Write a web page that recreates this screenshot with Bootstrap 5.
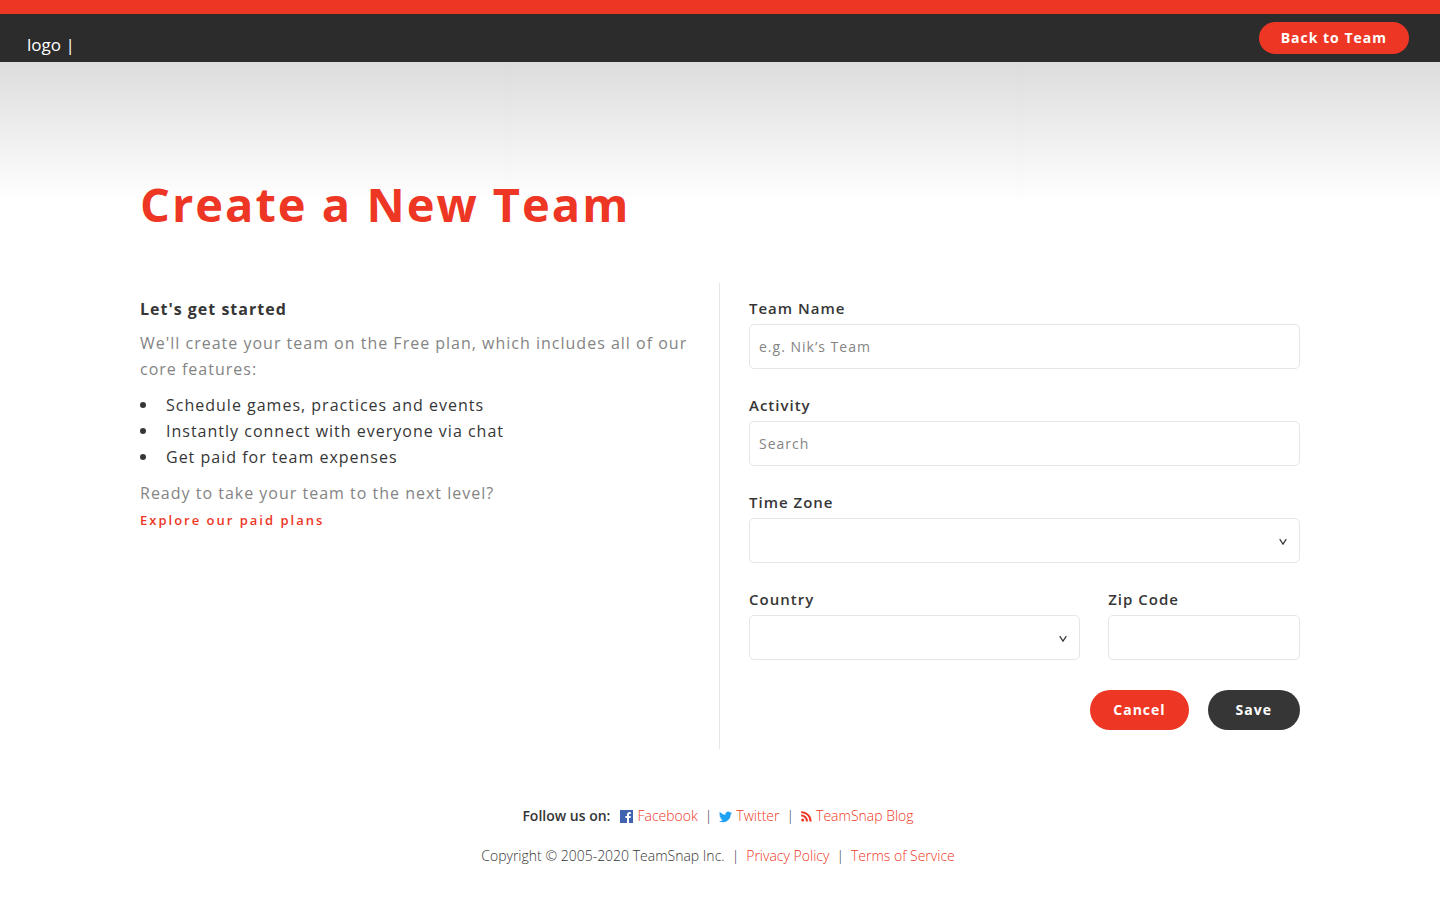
<!DOCTYPE html>
<html lang="en">
<head>
<meta charset="utf-8">
<meta name="viewport" content="width=device-width, initial-scale=1">
<title>Create a New Team</title>
<link rel="stylesheet" href="https://cdn.jsdelivr.net/npm/bootstrap@5.3.0/dist/css/bootstrap.min.css">
<style>
  :root { --brand: #ee3625; --ink: #363636; --bar: #2c2c2c; --line: #e6e6e6; }
  body { font-family: "Open Sans", sans-serif; font-size: 16px; line-height: 26px; color: var(--ink); background: #fff; }
  .topbar { border-top: 14px solid var(--brand); background: var(--bar); min-height: 62px; padding: 0 31px 0 27px; }
  .brand-text { font-size: 17px; line-height: 24px; color: #fff; padding-top: 14px; }
  .hero-fade { background: linear-gradient(#dcdcdc, #fff 140px) no-repeat; }
  .page-wrap { max-width: 1160px; }
  .page-title { font-size: 47px; line-height: 64px; font-weight: 700; letter-spacing: 2px; color: var(--brand); padding: 110px 0 47px; }
  .btn-pill { --bs-btn-color: #fff; --bs-btn-hover-color: #fff; --bs-btn-active-color: #fff; --bs-btn-border-width: 0; font-size: 14px; line-height: 20px; font-weight: 700; letter-spacing: 1px; padding: 10px 23px; }
  .btn-brand { --bs-btn-bg: var(--brand); --bs-btn-hover-bg: #d42d1e; --bs-btn-active-bg: #c0281a; }
  .btn-ink { --bs-btn-bg: var(--ink); --bs-btn-hover-bg: #222; --bs-btn-active-bg: #111; padding-inline: 28px; }
  .btn-back { padding: 6px 22px; }
  .intro, .team-form { padding-top: 13px; letter-spacing: 1px; }
  .intro { padding-right: 28px; }
  .intro-title { font-size: 16px; line-height: 26px; font-weight: 700; }
  .muted-text { color: #848484; }
  .feature-list { padding-left: 26px; margin: 10px 0; list-style: none; }
  .feature-list li { position: relative; }
  .feature-list li::before { content: ""; position: absolute; left: -26px; top: 10px; width: 6px; height: 6px; border-radius: 50%; background: var(--ink); }
  .brand-link { color: var(--brand); text-decoration: none; }
  .brand-link:hover { text-decoration: underline; }
  .plans-link { font-size: 13px; font-weight: 600; letter-spacing: 2px; }
  .form-label { font-size: 15px; line-height: 24px; font-weight: 600; margin-bottom: 4px; }
  .form-control, .form-select { height: 45px; border-color: var(--line); border-radius: 5px; font-size: 14px; letter-spacing: 1px; padding-left: 9px; color: var(--ink); }
  .form-control::placeholder { color: #848484; }
  .form-select { background-image: url("data:image/svg+xml,%3Csvg xmlns='http://www.w3.org/2000/svg' viewBox='0 0 8 8'%3E%3Cpath d='M.7 1.2 4 6.2 7.3 1.2' fill='none' stroke='%23363636' stroke-width='1.2'/%3E%3C/svg%3E"); background-size: 8px 8px; background-position: right 12px top 19px; }
  .place-grid { display: grid; grid-template-columns: 19fr 11fr; column-gap: 28px; }
  .form-actions { gap: 19px; padding: 30px 0 19px; }
  .page-foot { font-size: 14px; line-height: 20px; font-weight: 300; padding-top: 57px; }
  .foot-line { gap: 7px; padding-right: 4px; }
  .follow-text { font-weight: 600; margin-right: 3px; }
  @media (min-width: 992px) {
    .intro { border-right: 1px solid var(--line); }
    .team-form { padding-left: 29px; }
  }
</style>
</head>
<body>
<header class="topbar d-flex justify-content-between align-items-center">
  <span class="brand-text">logo |</span>
  <button type="button" class="btn btn-pill btn-brand btn-back rounded-pill">Back to Team</button>
</header>

<div class="hero-fade px-3">
  <main class="page-wrap mx-auto">
    <h1 class="page-title m-0">Create a New Team</h1>
    <div class="row g-0">
      <section class="col-lg-6 intro">
        <h2 class="intro-title mb-2">Let's get started</h2>
        <p class="muted-text m-0">We'll create your team on the Free plan, which includes all of our core features:</p>
        <ul class="feature-list">
          <li>Schedule games, practices and events</li>
          <li>Instantly connect with everyone via chat</li>
          <li>Get paid for team expenses</li>
        </ul>
        <p class="muted-text m-0">Ready to take your team to the next level?</p>
        <a class="brand-link plans-link" href="#">Explore our paid plans</a>
      </section>
      <form class="col-lg-6 team-form">
        <div class="mb-4">
          <label class="form-label d-block" for="team-name">Team Name</label>
          <input class="form-control" id="team-name" type="text" placeholder="e.g. Nik’s Team">
        </div>
        <div class="mb-4">
          <label class="form-label d-block" for="activity">Activity</label>
          <input class="form-control" id="activity" type="text" placeholder="Search">
        </div>
        <div class="mb-4">
          <label class="form-label d-block" for="time-zone">Time Zone</label>
          <select class="form-select" id="time-zone"><option value=""></option></select>
        </div>
        <div class="place-grid">
          <div>
            <label class="form-label d-block" for="country">Country</label>
            <select class="form-select" id="country"><option value=""></option></select>
          </div>
          <div>
            <label class="form-label d-block" for="zip">Zip Code</label>
            <input class="form-control" id="zip" type="text">
          </div>
        </div>
        <div class="form-actions d-flex justify-content-end">
          <button type="button" class="btn btn-pill btn-brand rounded-pill">Cancel</button>
          <button type="submit" class="btn btn-pill btn-ink rounded-pill">Save</button>
        </div>
      </form>
    </div>
  </main>
</div>

<footer class="page-foot px-3">
  <div class="foot-line d-flex flex-wrap justify-content-center mb-3 pb-1">
    <strong class="follow-text">Follow us on:</strong>
    <a class="brand-link d-flex align-items-center gap-1" href="#"><svg width="13" height="13" viewBox="0 0 13 13" aria-hidden="true"><path fill="#4264b0" d="M0 0h13v13H0z"/><path fill="#fff" d="M7 13V8H5.400V6.100H7V4.700C7 3 8 2.100 9.500 2.100l1.400.1v1.700h-1c-.8 0-.9.4-.9.900v1.300h1.900L10.600 8H9v5z"/></svg>Facebook</a>
    <span>|</span>
    <a class="brand-link d-flex align-items-center gap-1" href="#"><svg width="13" height="13" viewBox="0 0 16 16" aria-hidden="true"><path fill="#1da1f2" d="M5.026 15c6.038 0 9.341-5.003 9.341-9.334 0-.14 0-.282-.006-.422A6.685 6.685 0 0 0 16 3.542a6.658 6.658 0 0 1-1.889.518 3.301 3.301 0 0 0 1.447-1.817 6.533 6.533 0 0 1-2.087.793A3.286 3.286 0 0 0 7.875 6.030a9.325 9.325 0 0 1-6.767-3.429 3.289 3.289 0 0 0 1.018 4.382A3.323 3.323 0 0 1 .64 6.575v.045a3.288 3.288 0 0 0 2.632 3.218 3.203 3.203 0 0 1-.865.115 3.230 3.230 0 0 1-.614-.057 3.283 3.283 0 0 0 3.067 2.277A6.588 6.588 0 0 1 .78 13.580a6.320 6.320 0 0 1-.78-.045A9.344 9.344 0 0 0 5.026 15z"/></svg>Twitter</a>
    <span>|</span>
    <a class="brand-link d-flex align-items-center gap-1" href="#"><svg width="11" height="11" viewBox="0 0 11 11" aria-hidden="true"><circle cx="1.700" cy="9.100" r="1.500" fill="#ee3625"/><path fill="none" stroke="#ee3625" stroke-width="2" d="M.2 4.600a5.600 5.600 0 0 1 5.700 5.900M.2 1.300a9 9 0 0 1 9.400 9.200"/></svg>TeamSnap Blog</a>
  </div>
  <div class="foot-line d-flex flex-wrap justify-content-center pb-4">
    <span>Copyright © 2005-2020 TeamSnap Inc.</span>
    <span>|</span>
    <a class="brand-link" href="#">Privacy Policy</a>
    <span>|</span>
    <a class="brand-link" href="#">Terms of Service</a>
  </div>
</footer>
<script src="https://cdn.jsdelivr.net/npm/bootstrap@5.3.0/dist/js/bootstrap.bundle.min.js"></script>
</body>
</html>
